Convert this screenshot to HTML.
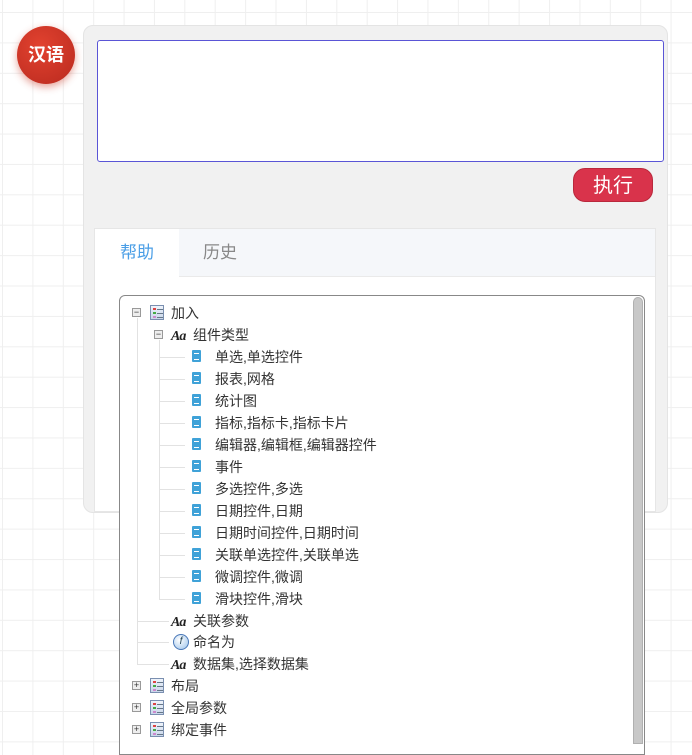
<!DOCTYPE html>
<html><head><meta charset="utf-8"><style>
*{margin:0;padding:0;box-sizing:border-box}
body{width:692px;height:744px;overflow:hidden;position:relative;font-family:"Liberation Sans","Noto Sans CJK SC",sans-serif;background-color:#fff;
background-image:linear-gradient(to right,#efefef 1px,transparent 1px),linear-gradient(to bottom,#efefef 1px,transparent 1px);background-size:30.4px 30.4px;background-position:2px 12px}
.av{position:absolute;left:17px;top:26px;width:58px;height:58px;border-radius:50%;background:radial-gradient(circle at 40% 35%,#e2422f,#b92a1f);box-shadow:0 3px 8px rgba(200,50,30,.45);color:#fff;font-weight:bold;font-size:18px;text-align:center;line-height:58px}
.panel{position:absolute;left:83px;top:25px;width:585px;height:488px;background:#f1f1f1;border:1px solid #e4e4e4;border-radius:10px}
.ta{position:absolute;left:97px;top:40px;width:567px;height:122px;background:#fff;border:1px solid #5a55d6;border-radius:3px}
.btn{position:absolute;left:573px;top:168px;width:80px;height:34px;background:#d9334b;border-radius:12px;color:#fff;font-size:20px;text-align:center;line-height:34px;border:1px solid #b9283c}
.tabs{position:absolute;left:94px;top:228px;width:562px;height:284px;background:#fff;border:1px solid #e6e6e6}
.th{position:absolute;left:0;top:0;width:560px;height:48px;background:#f5f7fa;border-bottom:1px solid #eaeaea}
.t1{position:absolute;left:0;top:0;width:84px;height:48px;background:#fff;color:#4a9ee6;font-size:17px;line-height:48px;padding-left:25px}
.t2{position:absolute;left:108px;top:0;color:#888;font-size:17px;line-height:48px}
.tree{position:absolute;left:119px;top:295px;width:526px;height:460px;background:#fff;border:1px solid #888;border-radius:6px 6px 0 0}
.sb{position:absolute;left:633px;top:297px;width:10px;height:447px;background:#c8c8c8;border-radius:5px 5px 0 0;border:1px solid #b0b0b0}
.r{position:absolute;font-size:14px;color:#333;line-height:20px;white-space:nowrap}
.ex{position:absolute;width:9px;height:9px;border:1px solid #999;background:#eee;font-size:9px;line-height:7px;text-align:center;color:#333}
.li{position:absolute;width:14px;height:15px;border:1px solid #7a8fb0;background:linear-gradient(#eef3fb,#c9d6ea)}
.li i{position:absolute;left:2px;width:3px;height:2px}
.li b{position:absolute;left:6px;width:6px;height:1px;background:#678}
.doc{position:absolute;width:9px;height:12px;background:#3fa2d8;border-radius:1px}
.doc:after{content:"";position:absolute;left:2px;top:3px;width:5px;height:5px;border-top:1px solid #fff;border-bottom:1px solid #fff}
.aa{position:absolute;font-family:"Liberation Serif",serif;font-style:italic;font-weight:bold;font-size:14px;color:#222;letter-spacing:-1px}
.vl{position:absolute;width:0;border-left:1px solid #e2e2e2}
.hl{position:absolute;height:0;border-top:1px solid #e2e2e2}
</style></head><body>
<div class="av">汉语</div>
<div class="panel"></div>
<div class="ta"></div>
<div class="btn">执行</div>
<div class="tabs"><div class="th"></div><div class="t1">帮助</div><div class="t2">历史</div></div>
<div class="tree"></div>
<div class="sb"></div>

<div class="vl" style="left:137px;top:318px;height:346px"></div>
<div class="vl" style="left:159px;top:340px;height:259px"></div>
<div class="hl" style="left:159px;top:357px;width:26px"></div>
<div class="hl" style="left:159px;top:379px;width:26px"></div>
<div class="hl" style="left:159px;top:401px;width:26px"></div>
<div class="hl" style="left:159px;top:423px;width:26px"></div>
<div class="hl" style="left:159px;top:445px;width:26px"></div>
<div class="hl" style="left:159px;top:467px;width:26px"></div>
<div class="hl" style="left:159px;top:489px;width:26px"></div>
<div class="hl" style="left:159px;top:511px;width:26px"></div>
<div class="hl" style="left:159px;top:533px;width:26px"></div>
<div class="hl" style="left:159px;top:555px;width:26px"></div>
<div class="hl" style="left:159px;top:577px;width:26px"></div>
<div class="hl" style="left:159px;top:599px;width:26px"></div>
<div class="hl" style="left:137px;top:621px;width:32px"></div>
<div class="hl" style="left:137px;top:642px;width:32px"></div>
<div class="hl" style="left:137px;top:664px;width:32px"></div>

<div class="ex" style="left:132px;top:308px">−</div>
<div class="li" style="left:150px;top:305px"><i style="top:2px;background:#d44"></i><i style="top:6px;background:#4a4"></i><i style="top:10px;background:#c8c"></i><b style="top:3px"></b><b style="top:7px"></b><b style="top:11px"></b></div>
<div class="r" style="left:171px;top:303px">加入</div>
<div class="ex" style="left:154px;top:330px">−</div>
<div class="aa" style="left:171px;top:329px">Aa</div>
<div class="r" style="left:193px;top:325px">组件类型</div>

<div class="doc" style="left:192px;top:350px"></div><div class="r" style="left:215px;top:347px">单选,单选控件</div>
<div class="doc" style="left:192px;top:372px"></div><div class="r" style="left:215px;top:369px">报表,网格</div>
<div class="doc" style="left:192px;top:394px"></div><div class="r" style="left:215px;top:391px">统计图</div>
<div class="doc" style="left:192px;top:416px"></div><div class="r" style="left:215px;top:413px">指标,指标卡,指标卡片</div>
<div class="doc" style="left:192px;top:438px"></div><div class="r" style="left:215px;top:435px">编辑器,编辑框,编辑器控件</div>
<div class="doc" style="left:192px;top:460px"></div><div class="r" style="left:215px;top:457px">事件</div>
<div class="doc" style="left:192px;top:482px"></div><div class="r" style="left:215px;top:479px">多选控件,多选</div>
<div class="doc" style="left:192px;top:504px"></div><div class="r" style="left:215px;top:501px">日期控件,日期</div>
<div class="doc" style="left:192px;top:526px"></div><div class="r" style="left:215px;top:523px">日期时间控件,日期时间</div>
<div class="doc" style="left:192px;top:548px"></div><div class="r" style="left:215px;top:545px">关联单选控件,关联单选</div>
<div class="doc" style="left:192px;top:570px"></div><div class="r" style="left:215px;top:567px">微调控件,微调</div>
<div class="doc" style="left:192px;top:592px"></div><div class="r" style="left:215px;top:589px">滑块控件,滑块</div>

<div class="aa" style="left:171px;top:615px">Aa</div><div class="r" style="left:193px;top:611px">关联参数</div>
<div style="position:absolute;left:173px;top:634px;width:16px;height:16px;border-radius:50%;border:1px solid #4a78b8;background:radial-gradient(circle at 40% 35%,#fff,#9cc3ea);font-size:10px;font-style:italic;color:#245;text-align:center;line-height:14px">f</div>
<div class="r" style="left:193px;top:632px">命名为</div>
<div class="aa" style="left:171px;top:658px">Aa</div><div class="r" style="left:193px;top:654px">数据集,选择数据集</div>

<div class="ex" style="left:132px;top:681px">+</div>
<div class="li" style="left:150px;top:678px"><i style="top:2px;background:#d44"></i><i style="top:6px;background:#4a4"></i><i style="top:10px;background:#c8c"></i><b style="top:3px"></b><b style="top:7px"></b><b style="top:11px"></b></div>
<div class="r" style="left:171px;top:676px">布局</div>
<div class="ex" style="left:132px;top:703px">+</div>
<div class="li" style="left:150px;top:700px"><i style="top:2px;background:#d44"></i><i style="top:6px;background:#4a4"></i><i style="top:10px;background:#c8c"></i><b style="top:3px"></b><b style="top:7px"></b><b style="top:11px"></b></div>
<div class="r" style="left:171px;top:698px">全局参数</div>
<div class="ex" style="left:132px;top:725px">+</div>
<div class="li" style="left:150px;top:722px"><i style="top:2px;background:#d44"></i><i style="top:6px;background:#4a4"></i><i style="top:10px;background:#c8c"></i><b style="top:3px"></b><b style="top:7px"></b><b style="top:11px"></b></div>
<div class="r" style="left:171px;top:720px">绑定事件</div>
</body></html>
